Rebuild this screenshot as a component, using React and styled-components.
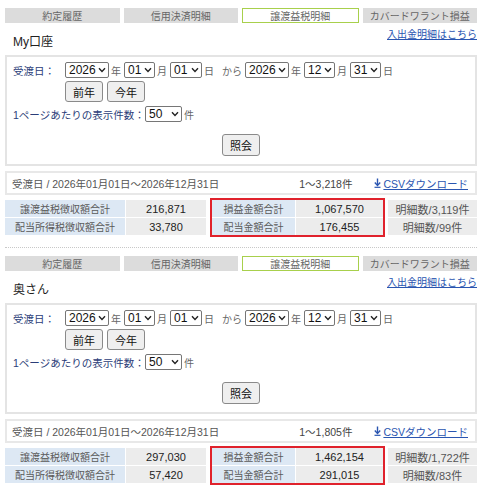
import React from "react";
import styled, { createGlobalStyle } from "styled-components";

const GlobalStyle = createGlobalStyle`
  body {
    margin: 0;
    background: #fff;
    font-family: "Liberation Sans", "Noto Sans CJK JP", sans-serif;
    color: #222;
  }
`;

const Page = styled.div`
  width: 472px;
  padding: 8px 3px 0 5px;
`;

const Section = styled.section``;

const Separator = styled.div`
  margin: 10px 0 8px;
  border-top: 1px dotted #c8c8c8;
`;

const TabBar = styled.div`
  display: flex;
  gap: 4px;
`;
const Tab = styled.div`
  flex: 1;
  height: 15px;
  box-sizing: border-box;
  display: flex;
  align-items: center;
  justify-content: center;
  font-size: 10px;
  color: #666;
  background: ${(p) => (p.$active ? "#fff" : "#dcdcdc")};
  border: ${(p) => (p.$active ? "1.5px solid #a8d04c" : "none")};
`;

const LinkRow = styled.div`
  height: 9px;
  margin-top: 5px;
  line-height: 9px;
  text-align: right;
`;
const HistoryLink = styled.a`
  font-size: 10px;
  color: #2a55b0;
  text-decoration: underline;
`;

const AccountName = styled.div`
  height: 10px;
  line-height: 10px;
  padding-left: 8px;
  font-size: 12px;
  color: #222;
`;

const SearchBox = styled.div`
  margin-top: 8px;
  border: 2px solid #e4e4e4;
  padding: 5px 6px 8px;
`;

const FieldRow = styled.div`
  display: flex;
  align-items: center;
  margin-top: ${(p) => p.$gap || 0}px;
  padding-left: ${(p) => (p.$indent ? 52 : 0)}px;
  gap: ${(p) => (p.$indent ? 4 : 0)}px;
`;
const FieldLabel = styled.span`
  width: ${(p) => p.$w || 52}px;
  font-size: 10.5px;
  color: #2b3d78;
  white-space: nowrap;
`;
const Unit = styled.span`
  font-size: 10px;
  color: #666;
  margin: 0 ${(p) => p.$m ?? 3}px 0 2px;
`;

const SelectWrap = styled.span`
  position: relative;
  display: inline-block;
  height: 16px;
`;
const Select = styled.select`
  appearance: none;
  -webkit-appearance: none;
  display: block;
  box-sizing: border-box;
  width: ${(p) => p.$w}px;
  height: 16px;
  margin: 0;
  padding: 0 0 0 3px;
  border: 1px solid #767676;
  border-radius: 2px;
  background: #fff;
  font: 12px "Liberation Sans", sans-serif;
  color: #111;
`;
const Chevron = styled.svg`
  position: absolute;
  right: 3px;
  top: 5px;
  pointer-events: none;
`;

const Button = styled.button`
  height: ${(p) => p.$h || 21}px;
  padding: 0 7px;
  border: 1px solid #8a8a8a;
  border-radius: 3px;
  background: #efefef;
  font: 11px "Liberation Sans", "Noto Sans CJK JP", sans-serif;
  color: #111;
`;

const SubmitRow = styled.div`
  display: flex;
  justify-content: center;
  margin-top: 12px;
`;

const ResultBar = styled.div`
  margin-top: 5px;
  height: 24px;
  box-sizing: border-box;
  border: 2px solid #e8e8e8;
  display: flex;
  align-items: center;
  padding: 0 7px 0 5px;
  font-size: 10.5px;
  color: #555;
`;
const Period = styled.span`
  flex: 1;
`;
const Count = styled.span`
  color: #444;
  margin-right: 22px;
`;
const CsvLink = styled.a`
  display: inline-flex;
  align-items: center;
  gap: 2px;
  color: #2a55b0;
  text-decoration: underline;
  font-size: 10.5px;
`;

const SummaryRow = styled.div`
  display: flex;
  align-items: center;
  margin-top: 3px;
`;
const Grid = styled.div`
  display: grid;
  grid-template-columns: ${(p) => p.$cols};
  grid-auto-rows: 17px;
  gap: 1px;
`;
const Highlight = styled.div`
  margin: 0 3px 0 4px;
  border: 2px solid #e0222c;
`;
const Cell = styled.div`
  display: flex;
  align-items: center;
  justify-content: center;
  font-size: ${(p) => (p.$label ? 10 : 11)}px;
  color: ${(p) => (p.$label ? "#5a5a5a" : p.$muted ? "#555" : "#222")};
  background: ${(p) => (p.$label ? "#dde8f4" : "#ececec")};
  white-space: nowrap;
`;

const DateSelect = ({ value, width }) => (
  <SelectWrap>
    <Select $w={width} defaultValue={value}>
      <option>{value}</option>
    </Select>
    <Chevron width="8" height="6" viewBox="0 0 8 6">
      <path d="M1 1.2 L4 4.4 L7 1.2" fill="none" stroke="#222" strokeWidth="1.4" />
    </Chevron>
  </SelectWrap>
);

const DownloadIcon = () => (
  <svg width="7" height="10" viewBox="0 0 7 10">
    <path d="M3.5 0.5 V7" stroke="#2a55b0" strokeWidth="1.4" />
    <path d="M0.8 4.6 L3.5 7.4 L6.2 4.6" fill="none" stroke="#2a55b0" strokeWidth="1.4" />
    <path d="M0.5 9.3 H6.5" stroke="#2a55b0" strokeWidth="1.2" />
  </svg>
);

const tabs = ["約定履歴", "信用決済明細", "譲渡益税明細", "カバードワラント損益"];

const accounts = [
  {
    name: "My口座",
    total: "1～3,218件",
    tax: "216,871",
    dividendTax: "33,780",
    profit: "1,067,570",
    dividend: "176,455",
    profitCount: "明細数/3,119件",
    dividendCount: "明細数/99件",
  },
  {
    name: "奥さん",
    total: "1～1,805件",
    tax: "297,030",
    dividendTax: "57,420",
    profit: "1,462,154",
    dividend: "291,015",
    profitCount: "明細数/1,722件",
    dividendCount: "明細数/83件",
  },
];

function AccountSection({ data }) {
  return (
    <Section>
      <TabBar>
        {tabs.map((t, i) => (
          <Tab key={t} $active={i === 2}>
            {t}
          </Tab>
        ))}
      </TabBar>
      <LinkRow>
        <HistoryLink href="#">入出金明細はこちら</HistoryLink>
      </LinkRow>
      <AccountName>{data.name}</AccountName>

      <SearchBox>
        <FieldRow>
          <FieldLabel>受渡日：</FieldLabel>
          <DateSelect value="2026" width={44} />
          <Unit>年</Unit>
          <DateSelect value="01" width={31} />
          <Unit>月</Unit>
          <DateSelect value="01" width={32} />
          <Unit $m={6}>日</Unit>
          <Unit $m={3}>から</Unit>
          <DateSelect value="2026" width={44} />
          <Unit>年</Unit>
          <DateSelect value="12" width={31} />
          <Unit>月</Unit>
          <DateSelect value="31" width={31} />
          <Unit>日</Unit>
        </FieldRow>
        <FieldRow $indent $gap={3}>
          <Button>前年</Button>
          <Button>今年</Button>
        </FieldRow>
        <FieldRow $gap={4}>
          <FieldLabel $w={132}>1ページあたりの表示件数：</FieldLabel>
          <DateSelect value="50" width={37} />
          <Unit>件</Unit>
        </FieldRow>
        <SubmitRow>
          <Button $h={22}>照会</Button>
        </SubmitRow>
      </SearchBox>

      <ResultBar>
        <Period>受渡日 / 2026年01月01日～2026年12月31日</Period>
        <Count>{data.total}</Count>
        <CsvLink href="#">
          <DownloadIcon />
          CSVダウンロード
        </CsvLink>
      </ResultBar>

      <SummaryRow>
        <Grid $cols="120px 80px">
          <Cell $label>譲渡益税徴収額合計</Cell>
          <Cell>{data.tax}</Cell>
          <Cell $label>配当所得税徴収額合計</Cell>
          <Cell>{data.dividendTax}</Cell>
        </Grid>
        <Highlight>
          <Grid $cols="83px 87px">
            <Cell $label>損益金額合計</Cell>
            <Cell>{data.profit}</Cell>
            <Cell $label>配当金額合計</Cell>
            <Cell>{data.dividend}</Cell>
          </Grid>
        </Highlight>
        <Grid $cols="89px">
          <Cell $muted>{data.profitCount}</Cell>
          <Cell $muted>{data.dividendCount}</Cell>
        </Grid>
      </SummaryRow>
    </Section>
  );
}

export default function App() {
  return (
    <>
      <GlobalStyle />
      <Page>
        <AccountSection data={accounts[0]} />
        <Separator />
        <AccountSection data={accounts[1]} />
      </Page>
    </>
  );
}
